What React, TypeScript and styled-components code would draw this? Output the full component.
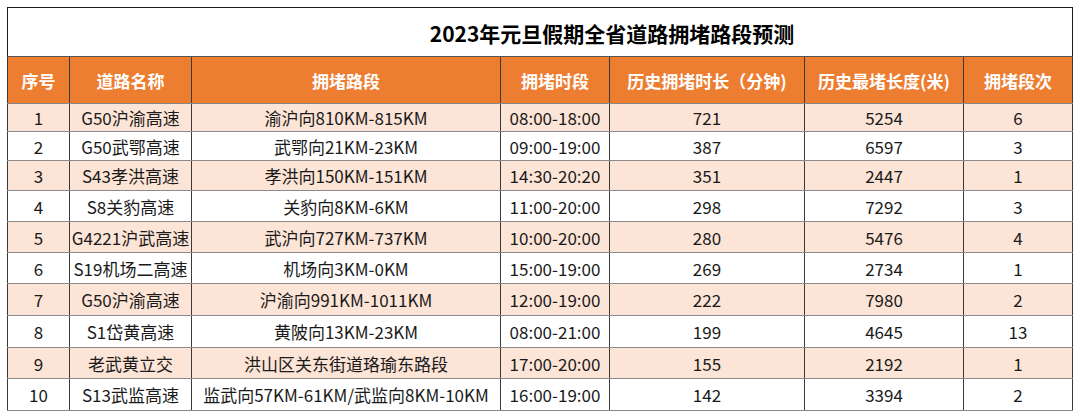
import React from 'react';
import styled, { createGlobalStyle } from 'styled-components';

const GlobalStyle = createGlobalStyle`
  html, body {
    margin: 0;
    padding: 0;
    background: #ffffff;
  }
  body {
    font-family: "Noto Sans CJK SC", "Noto Sans", sans-serif;
  }
`;

type Row = {
  no: number;
  road: string;
  section: string;
  time: string;
  minutes: number;
  length: number;
  count: number;
  h: number;
};

const rows: Row[] = [
  { no: 1, road: 'G50沪渝高速', section: '渝沪向810KM-815KM', time: '08:00-18:00', minutes: 721, length: 5254, count: 6, h: 28 },
  { no: 2, road: 'G50武鄂高速', section: '武鄂向21KM-23KM', time: '09:00-19:00', minutes: 387, length: 6597, count: 3, h: 29 },
  { no: 3, road: 'S43孝洪高速', section: '孝洪向150KM-151KM', time: '14:30-20:20', minutes: 351, length: 2447, count: 1, h: 30 },
  { no: 4, road: 'S8关豹高速', section: '关豹向8KM-6KM', time: '11:00-20:00', minutes: 298, length: 7292, count: 3, h: 31 },
  { no: 5, road: 'G4221沪武高速', section: '武沪向727KM-737KM', time: '10:00-20:00', minutes: 280, length: 5476, count: 4, h: 31 },
  { no: 6, road: 'S19机场二高速', section: '机场向3KM-0KM', time: '15:00-19:00', minutes: 269, length: 2734, count: 1, h: 31 },
  { no: 7, road: 'G50沪渝高速', section: '沪渝向991KM-1011KM', time: '12:00-19:00', minutes: 222, length: 7980, count: 2, h: 32 },
  { no: 8, road: 'S1岱黄高速', section: '黄陂向13KM-23KM', time: '08:00-21:00', minutes: 199, length: 4645, count: 13, h: 32 },
  { no: 9, road: '老武黄立交', section: '洪山区关东街道珞瑜东路段', time: '17:00-20:00', minutes: 155, length: 2192, count: 1, h: 31 },
  { no: 10, road: 'S13武监高速', section: '监武向57KM-61KM/武监向8KM-10KM', time: '16:00-19:00', minutes: 142, length: 3394, count: 2, h: 32 },
];

const headers = ['序号', '道路名称', '拥堵路段', '拥堵时段', '历史拥堵时长（分钟)', '历史最堵长度(米)', '拥堵段次'];
const widths = [62, 122, 309, 109, 195, 159, 109];

export default function App() {
  return (
    <Page>
      <GlobalStyle />
      <Table>
        <colgroup>
          {widths.map((w, i) => (
            <col key={i} style={{ width: w }} />
          ))}
        </colgroup>
        <thead>
          <tr>
            <TitleCell colSpan={7}>2023年元旦假期全省道路拥堵路段预测</TitleCell>
          </tr>
          <HeadRow>
            {headers.map((h) => (
              <HeadCell key={h}>{h}</HeadCell>
            ))}
          </HeadRow>
        </thead>
        <tbody>
          {rows.map((r) => (
            <BodyRow key={r.no} $alt={r.no % 2 === 1} style={{ height: r.h }}>
              <Cell>{r.no}</Cell>
              <Cell>{r.road}</Cell>
              <Cell>{r.section}</Cell>
              <Cell>{r.time}</Cell>
              <Cell>{r.minutes}</Cell>
              <Cell>{r.length}</Cell>
              <Cell>{r.count}</Cell>
            </BodyRow>
          ))}
        </tbody>
      </Table>
    </Page>
  );
}

const Page = styled.div`
  padding: 7px 0 0 7px;
  width: 1080px;
  height: 416px;
  box-sizing: border-box;
`;

const Table = styled.table`
  width: 1066px;
  table-layout: fixed;
  border-collapse: collapse;
  border: 1px solid #1a1a1a;
`;

const TitleCell = styled.th`
  height: 46px;
  padding: 2px 0 0 144px;
  font-size: 21px;
  font-weight: 700;
  color: #000;
  text-align: center;
  vertical-align: middle;
  border: 1px solid #1a1a1a;
  border-bottom-color: #555;
`;

const HeadRow = styled.tr`
  height: 47px;
  background: #ed7d31;
`;

const HeadCell = styled.th`
  padding: 0;
  font-size: 17px;
  font-weight: 700;
  color: #ffffff;
  text-align: center;
  white-space: nowrap;
  border-top: 1px solid #555;
  border-bottom: 1px solid #888;
  border-left: 1px solid #3a3a3a;
  border-right: 1px solid #3a3a3a;
`;

const BodyRow = styled.tr<{ $alt: boolean }>`
  background: ${(p) => (p.$alt ? '#fce4d6' : '#ffffff')};
`;

const Cell = styled.td`
  padding: 0;
  font-size: 17px;
  color: #1a1a1a;
  text-align: center;
  vertical-align: middle;
  white-space: nowrap;
  overflow: hidden;
  border-top: 1px solid #8a8a8a;
  border-bottom: 1px solid #8a8a8a;
  border-left: 1px solid #3a3a3a;
  border-right: 1px solid #3a3a3a;
`;
